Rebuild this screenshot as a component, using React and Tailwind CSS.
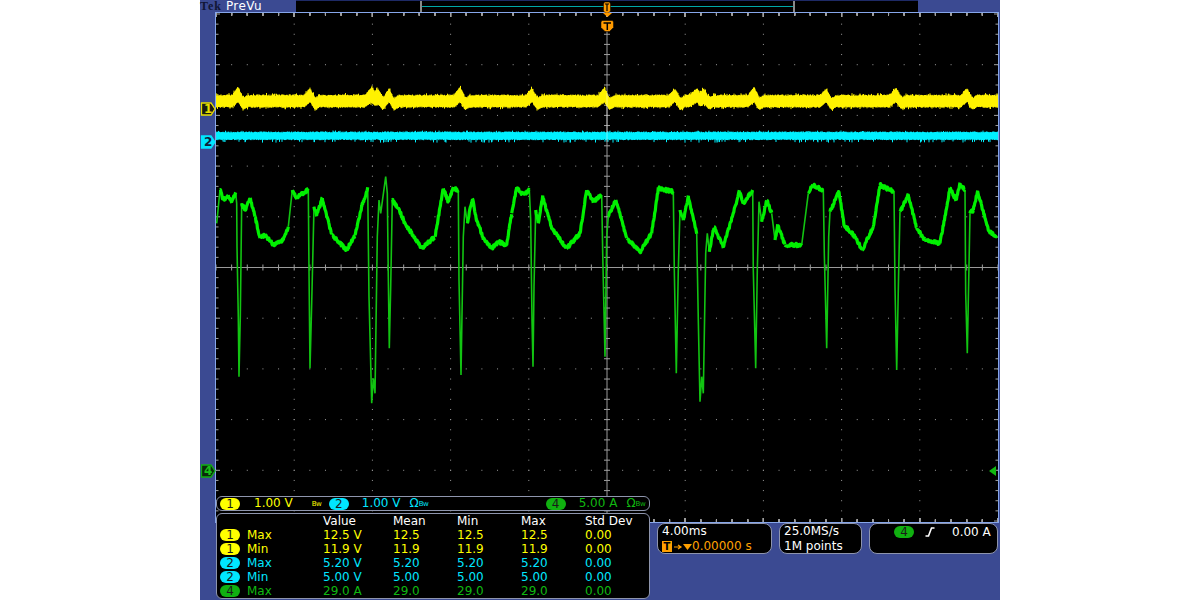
import { useMemo } from 'react'

const YELLOW = 'text-[#ffff00]'
const CYAN = 'text-[#00e6ff]'
const GREEN = 'text-[#10b810]'

const ROWS = [
  { ch: '1', pill: 'bg-[#ffff00]', color: YELLOW, name: 'Max', vals: ['12.5 V', '12.5', '12.5', '12.5', '0.00'] },
  { ch: '1', pill: 'bg-[#ffff00]', color: YELLOW, name: 'Min', vals: ['11.9 V', '11.9', '11.9', '11.9', '0.00'] },
  { ch: '2', pill: 'bg-[#00e6ff]', color: CYAN, name: 'Max', vals: ['5.20 V', '5.20', '5.20', '5.20', '0.00'] },
  { ch: '2', pill: 'bg-[#00e6ff]', color: CYAN, name: 'Min', vals: ['5.00 V', '5.00', '5.00', '5.00', '0.00'] },
  { ch: '4', pill: 'bg-[#10b010]', color: GREEN, name: 'Max', vals: ['29.0 A', '29.0', '29.0', '29.0', '0.00'] },
]

// key points of the green trace, read off the zoomed crops (x*3, y*3 from the crop corner)
const Z6 = [[5,160],[15,60],[25,90],[40,75],[50,95],[62,70],[65,100],[66,230],[70,440],[72,620],[76,440],[80,100],[90,120],[105,85],[120,140],[135,205],[150,195],[175,225],[205,210],[220,170],[232,60],[245,85],[270,65],[280,60],[282,300],[285,595],[290,400],[297,110],[305,135],[322,85],[350,195],[395,240],[420,195],[440,110],[458,55],[462,380],[470,700],[475,625],[480,670],[487,200],[492,90],[497,130],[512,20],[517,70],[520,320],[523,535],[527,350],[532,90],[550,115],[570,160],[620,235],[660,200],[685,55],[700,95],[715,55],[730,60],[732,330],[738,615],[745,200],[750,110],[757,160],[772,85]]
const Z7 = [[20,150],[40,205],[65,235],[85,215],[110,225],[125,130],[140,55],[160,75],[178,60],[182,150],[186,450],[189,590],[192,350],[197,120],[205,160],[218,80],[245,175],[290,235],[330,190],[350,60],[370,95],[395,75],[398,250],[405,560],[410,200],[415,140],[437,90],[470,205],[510,245],[545,190],[565,55],[610,65],[613,300],[619,610],[625,300],[630,120],[640,150],[655,80],[680,190],[685,450],[690,695],[695,620],[700,670],[707,250],[712,190],[718,245],[732,170],[760,230],[790,130],[808,65]]
const Z8 = [[10,100],[38,60],[40,300],[47,595],[52,300],[57,95],[65,155],[80,90],[95,130],[105,210],[113,165],[135,225],[185,225],[205,70],[218,45],[250,60],[253,250],[260,535],[266,200],[270,125],[297,65],[312,165],[345,200],[367,240],[400,170],[420,45],[462,65],[465,350],[470,600],[476,300],[480,125],[505,75],[530,175],[555,210],[600,220],[630,55],[648,90],[660,40],[675,60],[677,370],[682,550],[690,130],[700,120],[713,65],[745,180],[770,200]]

const GREEN_PTS = [
  ...Z6.map(([x, y]) => [215 + x / 3, 170 + y / 3]),
  ...Z7.map(([x, y]) => [470 + x / 3, 170 + y / 3]),
  ...Z8.map(([x, y]) => [740 + x / 3, 170 + y / 3]),
]

// [x, half width, height]
const YELLOW_BUMPS = [[238,6,8],[310,6,7],[372,7,8],[377,7,9],[389,5,6],[460,6,8],[532,6,7],[604,6,7],[675,6,6],[697,8,7],[703,7,9],[754,6,8],[826,6,6],[896,7,7],[967,6,7]]

function rng(seed) {
  let s = seed
  return () => {
    s = (s * 16807) % 2147483647
    return s / 2147483647
  }
}

function yellowPath() {
  const r = rng(4242)
  let d = ''
  for (let x = 216; x < 998; x += 0.5) {
    let bump = 0
    let notch = 0
    let dip = 0
    for (const [bx, w, h] of YELLOW_BUMPS) {
      const a = Math.abs(x - bx)
      if (a < w) {
        bump = Math.max(bump, h * (1 - a / w))
        notch = Math.max(notch, 5 * (1 - a / w))
      }
      const after = x - bx
      if (after > 1 && after < 10) dip = Math.max(dip, 3 * (1 - Math.abs(after - 5) / 5))
    }
    const top = 94.5 + r() * 1.5 - (r() > 0.93 ? 1.5 : 0) - bump + dip
    const bottom = 106.5 + r() * 1.2 + (r() > 0.93 ? 1.5 : 0) - notch + dip
    d += `M${x} ${top.toFixed(1)}V${bottom.toFixed(1)}`
  }
  return d
}

function cyanPath() {
  const r = rng(99)
  let d = ''
  for (let x = 216; x < 998; x += 0.5) {
    const top = 131.5 + r() * 1.2 - (r() > 0.95 ? 1 : 0)
    const bottom = 139 + r() * 1.2 + (r() > 0.94 ? 2.5 : 0)
    d += `M${x} ${top.toFixed(1)}V${bottom.toFixed(1)}`
  }
  return d
}

function greenPaths() {
  const r = rng(777)
  let thick = ''
  let thin = ''
  for (let i = 1; i < GREEN_PTS.length; i++) {
    const [x0, y0] = GREEN_PTS[i - 1]
    const [x1, y1] = GREEN_PTS[i]
    const slope = Math.abs((y1 - y0) / (x1 - x0 || 0.1))
    if (slope > 7) {
      thin += `M${x0.toFixed(1)} ${y0.toFixed(1)}L${x1.toFixed(1)} ${y1.toFixed(1)}`
      continue
    }
    const n = Math.max(1, Math.round((x1 - x0) * 2))
    thick += `M${x0.toFixed(1)} ${y0.toFixed(1)}`
    for (let k = 1; k <= n; k++) {
      const x = x0 + ((x1 - x0) * k) / n
      const y = y0 + ((y1 - y0) * k) / n + (r() - 0.5) * 3.4
      thick += `L${x.toFixed(1)} ${y.toFixed(1)}`
    }
  }
  return { thick, thin }
}

function Graticule() {
  const paths = useMemo(() => ({ y: yellowPath(), c: cyanPath(), g: greenPaths() }), [])
  const cx = 607
  const cy = 267.5
  const dx = 78.2
  const dy = 50.7
  const dots = []
  const ticks = []
  for (let i = 0; i <= 10; i++) {
    const x = cx + (i - 5) * dx
    for (let j = 0; j <= 50; j++) {
      const y = cy + (j - 25) * (dy / 5)
      if (i !== 5 && i !== 0 && i !== 10) dots.push(<rect key={`v${i}-${j}`} x={x - 0.5} y={y - 0.5} width="1" height="1" fill="#9a9a9a" />)
    }
  }
  for (let j = 0; j <= 10; j++) {
    const y = cy + (j - 5) * dy
    for (let i = 0; i <= 50; i++) {
      const x = cx + (i - 25) * (dx / 5)
      if (j !== 5 && j !== 0 && j !== 10) dots.push(<rect key={`h${j}-${i}`} x={x - 0.5} y={y - 0.5} width="1" height="1" fill="#9a9a9a" />)
      // ticks on the top and bottom edges and on the centre line
      const major = i % 5 === 0
      ticks.push(`M${x} 13v${major ? 4 : 2.5}`)
      ticks.push(`M${x} 522v-${major ? 4 : 2.5}`)
      if (j === 5) ticks.push(`M${x} ${cy - 3}v6`)
    }
  }
  for (let j = 0; j <= 50; j++) {
    const y = cy + (j - 25) * (dy / 5)
    const major = j % 5 === 0
    ticks.push(`M216 ${y}h${major ? 4 : 2.5}`)
    ticks.push(`M998 ${y}h-${major ? 4 : 2.5}`)
    if (y > 30) ticks.push(`M${cx - 3} ${y}h6`)
  }
  return (
    <svg viewBox="216 13 782 509" width="782" height="509" className="block">
      <rect x="216" y="13" width="782" height="509" fill="#000" />
      {dots}
      <path d={ticks.join('')} stroke="#a0a0a0" strokeWidth="1" fill="none" />
      <path d={`M216 ${cy}H998M${cx} 30V522`} stroke="#9a9a9a" strokeWidth="1" fill="none" />
      <path d={paths.y} stroke="#fff200" strokeWidth="1" fill="none" />
      <path d={paths.c} stroke="#00f0ff" strokeWidth="1" fill="none" />
      <path d={`M${cx} 93V142`} stroke="#ffffff" strokeOpacity="0.45" strokeWidth="1" fill="none" />
      <path d={paths.g.thin} stroke="#12c412" strokeWidth="1.600" fill="none" strokeLinejoin="round" />
      <path d={paths.g.thick} stroke="#00f000" strokeWidth="3.200" fill="none" strokeLinejoin="round" />
      {/* trigger level arrow */}
      <path d="M989 471l7-5v10z" fill="#10b810" />
      {/* trigger position markers */}
      <path d="M603 13h9l-4.500 4z" fill="#ff9a00" />
      <path d="M602 20.500h10.500l1 1.500v5.500l-4 4h-4.500l-4-4v-5.500z" fill="#ff9a00" stroke="#000" strokeWidth="0.500" />
      <path d="M603.500 23h7.500M607.300 23v7" stroke="#000" strokeWidth="1.500" fill="none" />
    </svg>
  )
}

function Marker({ label, className, fill, stroke, text }) {
  return (
    <div className={`absolute left-0 w-[16px] h-[14px] ${className}`}>
      <svg viewBox="0 0 16 14" width="16" height="14" className="absolute inset-0">
        <path d="M1.500 1h9.500l4 6-4 6H1.500z" fill={fill} stroke={stroke} strokeWidth="1.300" />
      </svg>
      <span className={`absolute left-[4px] top-0 text-[12px] leading-[14px] font-bold ${text}`}>{label}</span>
    </div>
  )
}

function Pill({ ch, className }) {
  return (
    <span className={`inline-flex items-center justify-center h-[12px] w-[20px] shrink-0 rounded-full text-[12px] leading-[12px] text-[#1a1a1a] ${className}`}>
      {ch}
    </span>
  )
}

// the tiny bandwidth-limit glyph next to a channel scale
function Bw({ color, className = '' }) {
  return <span className={`w-[9px] text-[7px] leading-[8px] tracking-[-0.5px] ${color} ${className}`}>Bw</span>
}

export default function App() {
  return (
    <div className="flex justify-center h-[600px] w-[1200px] overflow-hidden bg-white whitespace-nowrap [font-family:'DejaVu_Sans',sans-serif]">
      <div className="relative flex flex-col w-[800px] h-[600px] bg-[#3b4a92]">
        {/* top status bar */}
        <div className="flex h-[12px]">
          <div className="flex w-[96px] items-center">
            <span className="[font-family:'Liberation_Serif',serif] font-bold text-[12px] leading-[12px] tracking-[1px] text-[#101535]">Tek</span>
            <span className="ml-[4px] text-[12px] leading-[12px] tracking-[0.4px] text-white">PreVu</span>
          </div>
          <div className="relative w-[622px] bg-black border-t border-[#1e2a66]">
            <div className="absolute left-[124px] top-0 w-[375px] h-[11px] border-x-2 border-[#8a8a8a] flex items-center">
              <div className="w-full h-[1px] bg-[#00a8a8]" />
            </div>
            <svg viewBox="0 0 12 12" width="12" height="12" className="absolute left-[305px] top-0">
              <path d="M3.500 1h5l1 2v7l-2 2h-3l-2-2V3z" fill="#ff9a00" stroke="#000" strokeWidth="0.500" />
              <path d="M6 3v7M4 3h4" stroke="#000" strokeWidth="1.200" />
            </svg>
          </div>
        </div>

        {/* waveform area */}
        <div className="flex">
          <div className="w-[15px]" />
          <div className="border border-[#86a6ea]">
            <Graticule />
          </div>
        </div>
        <Marker label="1" className="top-[102px]" fill="#1a1a10" stroke="#e8e000" text="text-[#e8e000]" />
        <Marker label="2" className="top-[135px]" fill="#00e6ff" stroke="#00e6ff" text="text-[#10203a]" />
        <Marker label="4" className="top-[464px]" fill="#0a2a0a" stroke="#10b010" text="text-[#18c018]" />

        {/* readouts under the graticule */}
        <div className="flex pl-[457px] text-[12px] leading-[15px] text-white">
          <div className="w-[115px] h-[31px] mr-[7px] bg-black border border-[#8e95ad] rounded-[8px] pl-[4px]">
            <div>4.00ms</div>
            <div className="flex items-center text-[#ffa000]">
              <span className="inline-flex w-[10px] h-[11px] items-center justify-center bg-[#ffa000] text-black text-[10px] leading-[10px] font-bold">T</span>
              <svg viewBox="0 0 19 10" width="19" height="10" className="ml-[1px]">
                <path d="M1 5h6M5 3l3 2-3 2" stroke="#ffa000" strokeWidth="1.200" fill="none" />
                <path d="M10 2h9l-4.500 6z" fill="#ffa000" />
              </svg>
              <span>0.00000 s</span>
            </div>
          </div>
          <div className="w-[83px] h-[31px] mr-[7px] bg-black border border-[#8e95ad] rounded-[8px] pl-[4px]">
            <div>25.0MS/s</div>
            <div>1M points</div>
          </div>
          <div className="w-[129px] h-[31px] bg-black border border-[#8e95ad] rounded-[8px]">
            <div className="flex items-center h-[16px] pl-[24px]">
              <Pill ch="4" className="bg-[#10b010]" />
              <svg viewBox="0 0 12 12" width="12" height="12" className="ml-[10px]">
                <path d="M1.500 10h3l3-8h3" stroke="#fff" strokeWidth="1.600" fill="none" />
              </svg>
              <span className="ml-[16px]">0.00 A</span>
            </div>
          </div>
        </div>

        {/* channel scale bar */}
        <div className="absolute left-[16px] top-[496px] flex items-center w-[434px] h-[15px] bg-black border border-[#8e95ad] rounded-[6px] text-[12px] leading-[13px]">
          <Pill ch="1" className="ml-[3px] bg-[#ffff00]" />
          <span className={`ml-[14px] ${YELLOW}`}>1.00 V</span>
          <Bw color={YELLOW} className="ml-[19px]" />
          <Pill ch="2" className="ml-[8px] bg-[#00e6ff]" />
          <span className={`ml-[13px] ${CYAN}`}>1.00 V</span>
          <span className={`ml-[9px] ${CYAN}`}>Ω</span>
          <Bw color={CYAN} />
          <Pill ch="4" className="ml-[118px] bg-[#10b010]" />
          <span className={`ml-[13px] ${GREEN}`}>5.00 A</span>
          <span className={`ml-[9px] ${GREEN}`}>Ω</span>
          <Bw color={GREEN} />
        </div>

        {/* measurement table */}
        <div className="absolute left-[16px] top-[513px] w-[434px] h-[86px] bg-black border border-[#8e95ad] rounded-[6px] pl-[3px] text-[12px] leading-[14px]">
          <div className="grid grid-cols-[27px_76px_70px_64px_64px_64px_auto] text-white">
            <span />
            <span />
            <span>Value</span>
            <span>Mean</span>
            <span>Min</span>
            <span>Max</span>
            <span>Std Dev</span>
          </div>
          {ROWS.map((row, i) => (
            <div key={i} className={`grid grid-cols-[27px_76px_70px_64px_64px_64px_auto] items-center ${row.color}`}>
              <Pill ch={row.ch} className={row.pill} />
              <span>{row.name}</span>
              {row.vals.map((v, k) => <span key={k}>{v}</span>)}
            </div>
          ))}
        </div>
      </div>
    </div>
  )
}
